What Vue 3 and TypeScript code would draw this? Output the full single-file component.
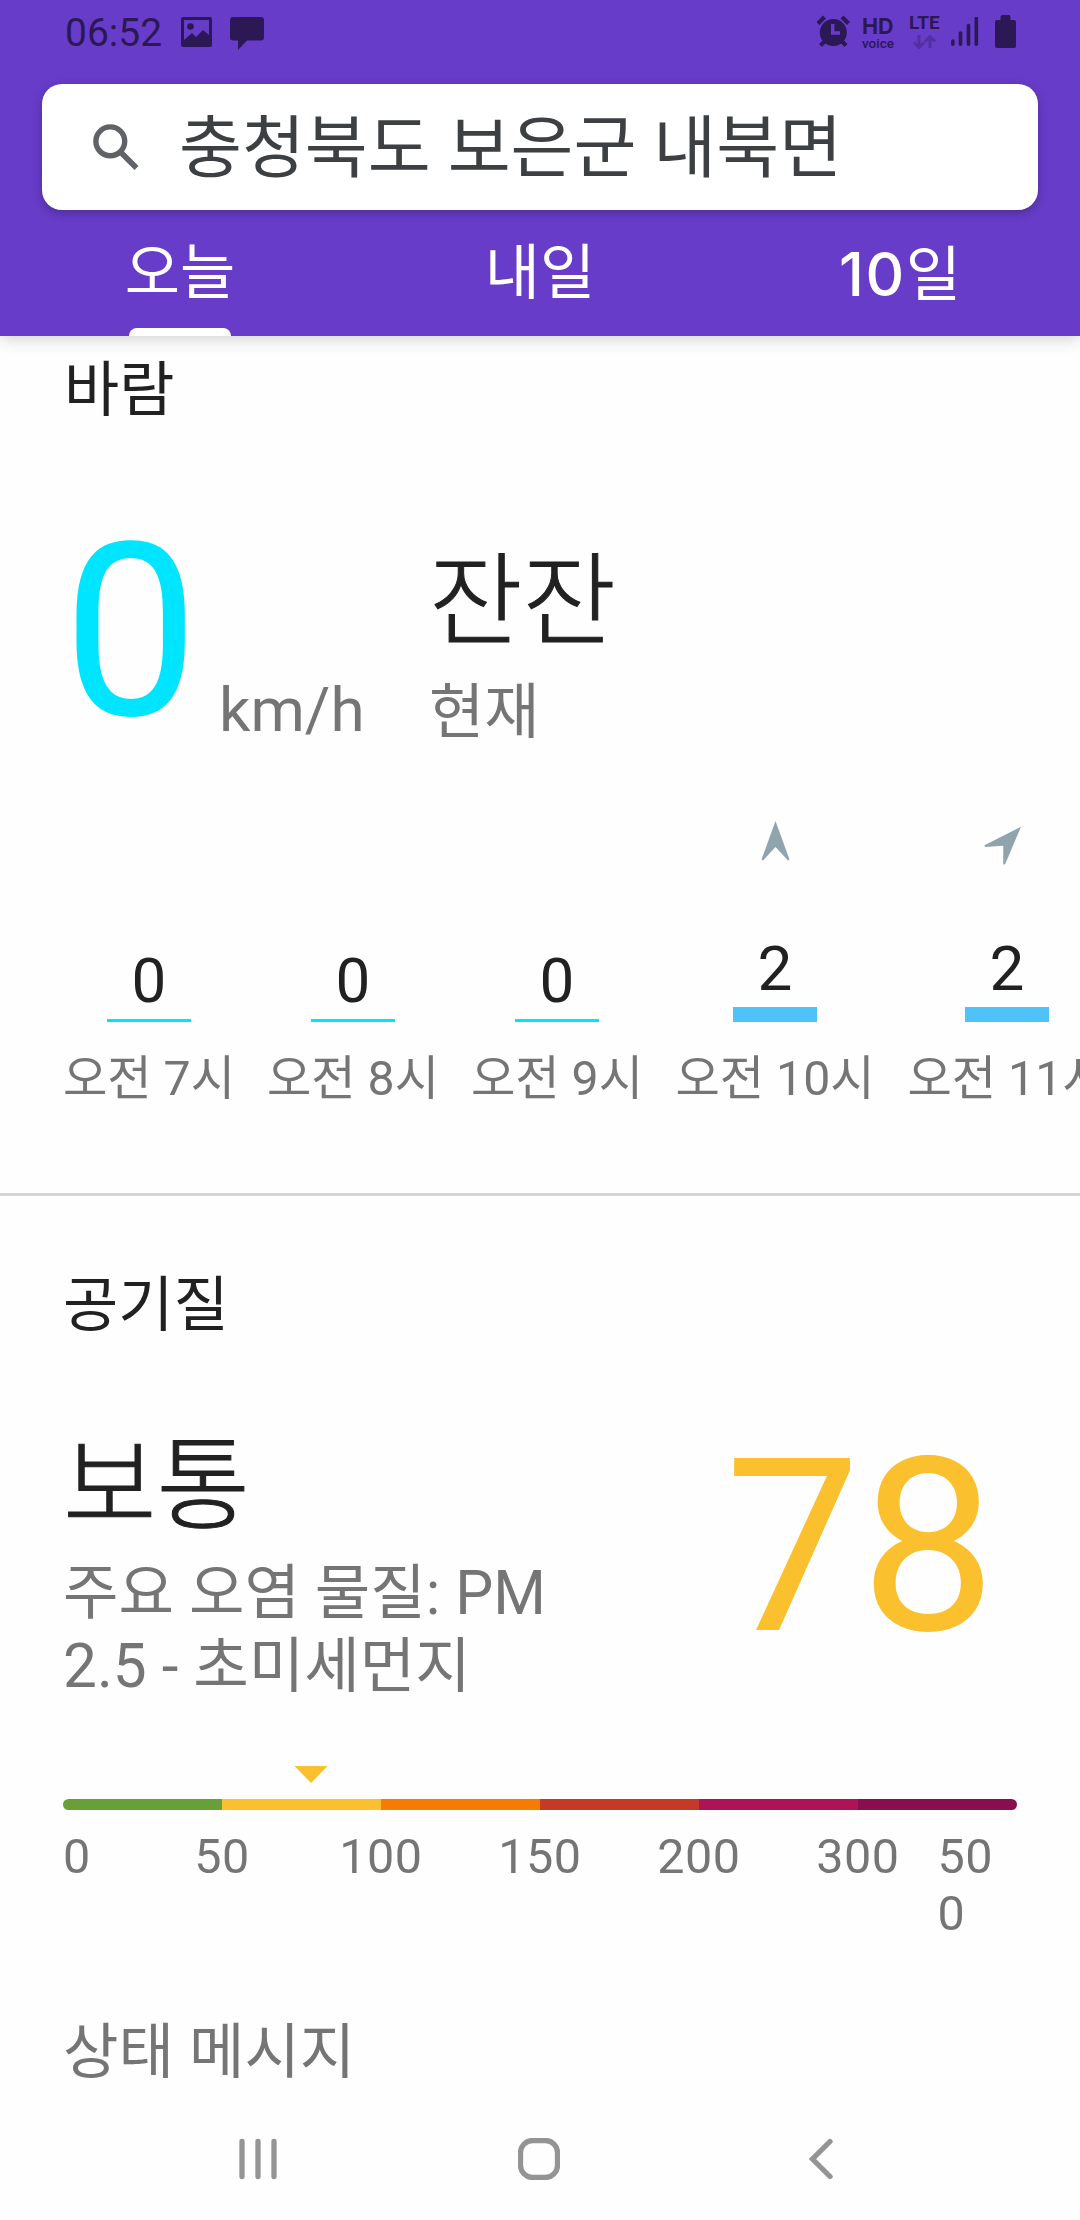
<script setup lang="ts">
interface Hour {
  label: string
  speed: number
  heading: number | null
}

interface Band {
  from: number
  color: string
}

const tabs: { name: string; digits?: string; active: boolean }[] = [
  { name: '오늘', active: true },
  { name: '내일', active: false },
  { name: '일', digits: '10', active: false },
]

const hours: Hour[] = [
  { label: '오전 7시', speed: 0, heading: null },
  { label: '오전 8시', speed: 0, heading: null },
  { label: '오전 9시', speed: 0, heading: null },
  { label: '오전 10시', speed: 2, heading: 0 },
  { label: '오전 11시', speed: 2, heading: 43 },
]

const bands: Band[] = [
  { from: 0, color: '#689f38' },
  { from: 50, color: '#fbc02d' },
  { from: 100, color: '#f57c00' },
  { from: 150, color: '#c53929' },
  { from: 200, color: '#ad1457' },
  { from: 300, color: '#880e4f' },
]

const ticks = [...bands.map((b) => b.from), 500]
const aqi = 78
const markerLeft = `${((aqi / 50) * 100) / bands.length}%`
const barHeight = (speed: number) => `${3 + speed * 6}px`
</script>

<template>
  <div class="screen">
    <header class="header">
      <div class="status">
        <span class="clock">06:52</span>
        <svg class="ic-image" viewBox="0 0 31 30" width="31" height="30">
          <path fill-rule="evenodd" d="M2 0H29Q31 0 31 2V28Q31 30 29 30H2Q0 30 0 28V2Q0 0 2 0ZM3 3V23L11 16L15 20L22 13L28 18V3Z" />
          <circle cx="9.500" cy="9.500" r="3.300" />
        </svg>
        <svg class="ic-chat" viewBox="0 0 34 33" width="34" height="33">
          <path d="M3 0H31Q34 0 34 3V20.500Q34 23.500 31 23.500H17L8 33V23.500H3Q0 23.500 0 20.500V3Q0 0 3 0Z" />
        </svg>
        <span class="grow"></span>
        <svg class="ic-alarm" viewBox="0 0 34 33" width="34" height="33">
          <circle cx="17.300" cy="17.500" r="13.500" />
          <path d="M2 8.500L8.500 2M32.500 8.500L26 2" stroke="#2b1855" stroke-width="4.200" />
          <path d="M9 26L4.500 30.500M25.500 26L30 30.500" stroke="#2b1855" stroke-width="4" />
          <path d="M16.700 9V18H24" fill="none" stroke="#673cc8" stroke-width="3.400" />
        </svg>
        <span class="hd"><b>HD</b><i>voice</i></span>
        <span class="lte">
          <b>LTE</b>
          <svg viewBox="0 0 24 16" width="24" height="16">
            <path d="M7 1V13M2 8.500L7 13.500L12 8.500M18 14V2.500M13 7.500L18 2.500L23 7.500" fill="none" stroke="#5230a0" stroke-width="3" />
          </svg>
        </span>
        <svg class="ic-signal" viewBox="0 0 28 31" width="28" height="31">
          <path d="M1.900 24V27.300M9.500 16V27.300M17.500 8.500V27.300M25.300 1.500V27.300" fill="none" stroke="#2b1855" stroke-width="3.600" stroke-linecap="round" />
        </svg>
        <svg class="ic-battery" viewBox="0 0 21 33" width="21" height="33">
          <path d="M7.500 0H13.500Q15.500 0 15.500 2V5H19Q21 5 21 7V31Q21 33 19 33H2Q0 33 0 31V7Q0 5 2 5H5.500V2Q5.500 0 7.500 0Z" />
        </svg>
      </div>

      <div class="search">
        <svg viewBox="0 0 48 48" width="48" height="48">
          <circle cx="18.300" cy="18.300" r="14.400" fill="none" stroke="#5f6368" stroke-width="5.400" />
          <path d="M28.500 29L44.500 45" stroke="#5f6368" stroke-width="5.600" />
        </svg>
        <span>충청북도 보은군 내북면</span>
      </div>

      <nav class="tabs">
        <div v-for="t in tabs" :key="t.name" class="tab" :class="{ active: t.active }">
          <span v-if="t.digits" class="digits">{{ t.digits }}</span>{{ t.name }}
        </div>
      </nav>
    </header>

    <section class="wind">
      <h2>바람</h2>
      <div class="now">
        <span class="speed">0</span>
        <span class="unit">km/h</span>
        <div class="desc">
          <strong>잔잔</strong>
          <span>현재</span>
        </div>
      </div>
      <div class="hours">
        <div v-for="h in hours" :key="h.label" class="hour">
          <svg v-if="h.heading !== null" class="arrow" viewBox="0 0 52 52" width="52" height="52">
            <path d="M26.500 6L40.500 44.500L39 45.500L26.500 32L14 45.500L12.500 44.500Z" fill="#90a4ae" :transform="`rotate(${h.heading} 26 26)`" />
          </svg>
          <span class="value">{{ h.speed }}</span>
          <span class="bar" :class="{ calm: h.speed === 0 }" :style="{ height: barHeight(h.speed) }"></span>
          <span class="time">{{ h.label }}</span>
        </div>
      </div>
    </section>

    <section class="air">
      <h2>공기질</h2>
      <div class="summary">
        <div class="level">
          <strong>보통</strong>
          <p>주요 오염 물질: PM<br />2.5 - 초미세먼지</p>
        </div>
        <span class="aqi">{{ aqi }}</span>
      </div>
      <div class="scale">
        <div class="marker-row">
          <svg class="marker" :style="{ left: markerLeft }" viewBox="0 0 33 17" width="33" height="17">
            <path d="M0 0H33L16.500 17Z" fill="#fbc02d" />
          </svg>
        </div>
        <div class="bands">
          <span v-for="b in bands" :key="b.from" :style="{ background: b.color }"></span>
        </div>
        <div class="ticks">
          <span v-for="t in ticks" :key="t">{{ t }}</span>
        </div>
      </div>
      <p class="message">상태 메시지</p>
    </section>

    <footer class="nav">
      <svg viewBox="0 0 38 42" width="38" height="42">
        <path d="M3 3.500V38.500M19 3.500V38.500M35 3.500V38.500" />
      </svg>
      <svg viewBox="0 0 42 42" width="42" height="42">
        <rect x="2.500" y="2.500" width="37" height="37" rx="12" />
      </svg>
      <svg viewBox="0 0 24 42" width="24" height="42">
        <path d="M21 3.500L3.500 21L21 38.500" />
      </svg>
    </footer>
  </div>
</template>

<style>
body {
  margin: 0;
  background: #fefefe;
}
</style>

<style scoped>
.screen {
  width: 1080px;
  height: 2220px;
  overflow: hidden;
  display: flex;
  flex-direction: column;
  background: #fefefe;
  color: #212121;
  font-family: Roboto, 'Noto Sans CJK KR', sans-serif;
}
h2,
p {
  margin: 0;
  font-weight: 400;
}
strong {
  font-weight: 300;
  -webkit-text-stroke: 1px #212121;
}
.header {
  height: 336px;
  flex: none;
  background: #673cc8;
  box-shadow: 0 2px 16px rgba(0, 0, 0, 0.2);
}
.status {
  height: 84px;
  display: flex;
  align-items: flex-start;
  box-sizing: border-box;
  padding: 0 64px 0 65px;
  color: #2b1855;
  fill: #2b1855;
}
.clock {
  width: 116px;
  font-size: 39px;
  line-height: 67px;
}
.ic-image {
  margin-top: 17px;
}
.ic-chat {
  margin: 17px 0 0 18px;
}
.grow {
  flex: 1;
}
.ic-alarm {
  margin: 15px 12px 0 0;
}
.hd {
  display: flex;
  flex-direction: column;
  width: 34px;
  margin: 14px 13px 0 0;
}
.hd b {
  font: 700 21.500px/24px Inter, sans-serif;
}
.hd i {
  font: 500 13.500px/10px Roboto, sans-serif;
}
.lte {
  display: flex;
  flex-direction: column;
  width: 31px;
  margin: 12px 11px 0 0;
}
.lte b {
  font: 700 19px/22px Roboto, sans-serif;
}
.lte svg {
  margin: 0 0 0 3px;
}
.ic-signal {
  margin: 17px 16px 0 0;
}
.ic-battery {
  margin-top: 15px;
}
.search {
  display: flex;
  align-items: center;
  height: 126px;
  margin: 0 42px;
  box-sizing: border-box;
  padding-left: 50px;
  border-radius: 20px;
  background: #fff;
  color: #3c4043;
  box-shadow: 0 3px 10px rgba(0, 0, 0, 0.25);
  font-size: 68.400px;
  line-height: 100px;
  white-space: nowrap;
}
.search svg {
  flex: none;
  margin-right: 39px;
}
.search span {
  margin-top: 4px;
}
.tabs {
  display: flex;
  height: 126px;
}
.tab {
  position: relative;
  flex: 1;
  height: 126px;
  line-height: 128px;
  font-size: 60px;
  color: #fff;
  text-align: center;
}
.tab.active::after {
  content: '';
  position: absolute;
  left: 129px;
  bottom: 0;
  width: 102px;
  height: 8px;
  border-radius: 8px 8px 0 0;
  background: #fff;
}
.digits {
  font-family: Inter, sans-serif;
  font-weight: 500;
  letter-spacing: 1.500px;
}
h2 {
  font-size: 60px;
  line-height: 72px;
}
.wind {
  padding: 19px 0 86px 63px;
  border-bottom: 3px solid #d6d6d6;
}
.wind h2 {
  padding-left: 1px;
}
.now {
  display: flex;
  align-items: flex-end;
  height: 234px;
  margin-top: 86px;
}
.speed {
  align-self: flex-start;
  width: 156px;
  font-size: 241px;
  line-height: 240px;
  color: #00e5ff;
}
.unit {
  width: 210px;
  margin-bottom: 1px;
  font-size: 62px;
  line-height: 72px;
  color: #757575;
}
.desc {
  display: flex;
  flex-direction: column;
  margin-bottom: -2px;
}
.desc strong {
  font-size: 101.600px;
  line-height: 120px;
  margin-bottom: 14px;
}
.desc span {
  font-size: 60px;
  line-height: 72px;
  color: #757575;
}
.hours {
  display: flex;
  gap: 32px;
  margin-top: 68px;
  overflow: hidden;
}
.hour {
  flex: none;
  display: flex;
  flex-direction: column;
  align-items: center;
  width: 172px;
  height: 292px;
}
.hour:nth-child(n + 4) {
  width: 200px;
}
.arrow {
  flex: none;
}
.value {
  margin: auto 0 2px;
  font-size: 62px;
  line-height: 72px;
}
.bar {
  width: 84px;
  margin-bottom: 28px;
  background: #4fc3f7;
}
.bar.calm {
  background: #00e5ff;
}
.time {
  font-size: 48.200px;
  line-height: 58px;
  margin-bottom: -1px;
  color: #757575;
  white-space: nowrap;
}
.air {
  padding: 74px 63px 0;
}
.summary {
  display: flex;
  justify-content: space-between;
  margin-top: 85px;
  height: 276px;
}
.level strong {
  display: block;
  font-size: 101.600px;
  line-height: 120px;
  margin-bottom: 10px;
}
.level p {
  font-size: 60.300px;
  line-height: 73px;
  color: #757575;
}
.aqi {
  margin: 1px 21px 0 0;
  font-size: 241px;
  line-height: 240px;
  color: #fbc02d;
}
.scale {
  margin-top: 63px;
}
.marker-row {
  position: relative;
  height: 33px;
}
.marker {
  position: absolute;
  top: 0;
  transform: translateX(-50%);
}
.bands {
  display: flex;
  height: 11px;
  border-radius: 5.500px;
  overflow: hidden;
}
.bands span {
  flex: 1;
}
.ticks {
  display: flex;
  margin-top: 18px;
  font-size: 48.500px;
  letter-spacing: 0.500px;
  line-height: 57px;
  color: #757575;
  text-align: center;
  word-break: break-all;
}
.ticks span {
  width: 159px;
}
.ticks span:first-child,
.ticks span:last-child {
  width: 79.500px;
  text-align: left;
}
.message {
  margin-top: 75px;
  font-size: 60.300px;
  line-height: 72px;
  color: #757575;
}
.nav {
  display: flex;
  margin-top: 49px;
  padding-left: 239px;
  fill: none;
  stroke: #949494;
  stroke-width: 5.300;
  stroke-linecap: round;
}
.nav svg:nth-child(2) {
  margin: 0 249px 0 241px;
}
</style>
